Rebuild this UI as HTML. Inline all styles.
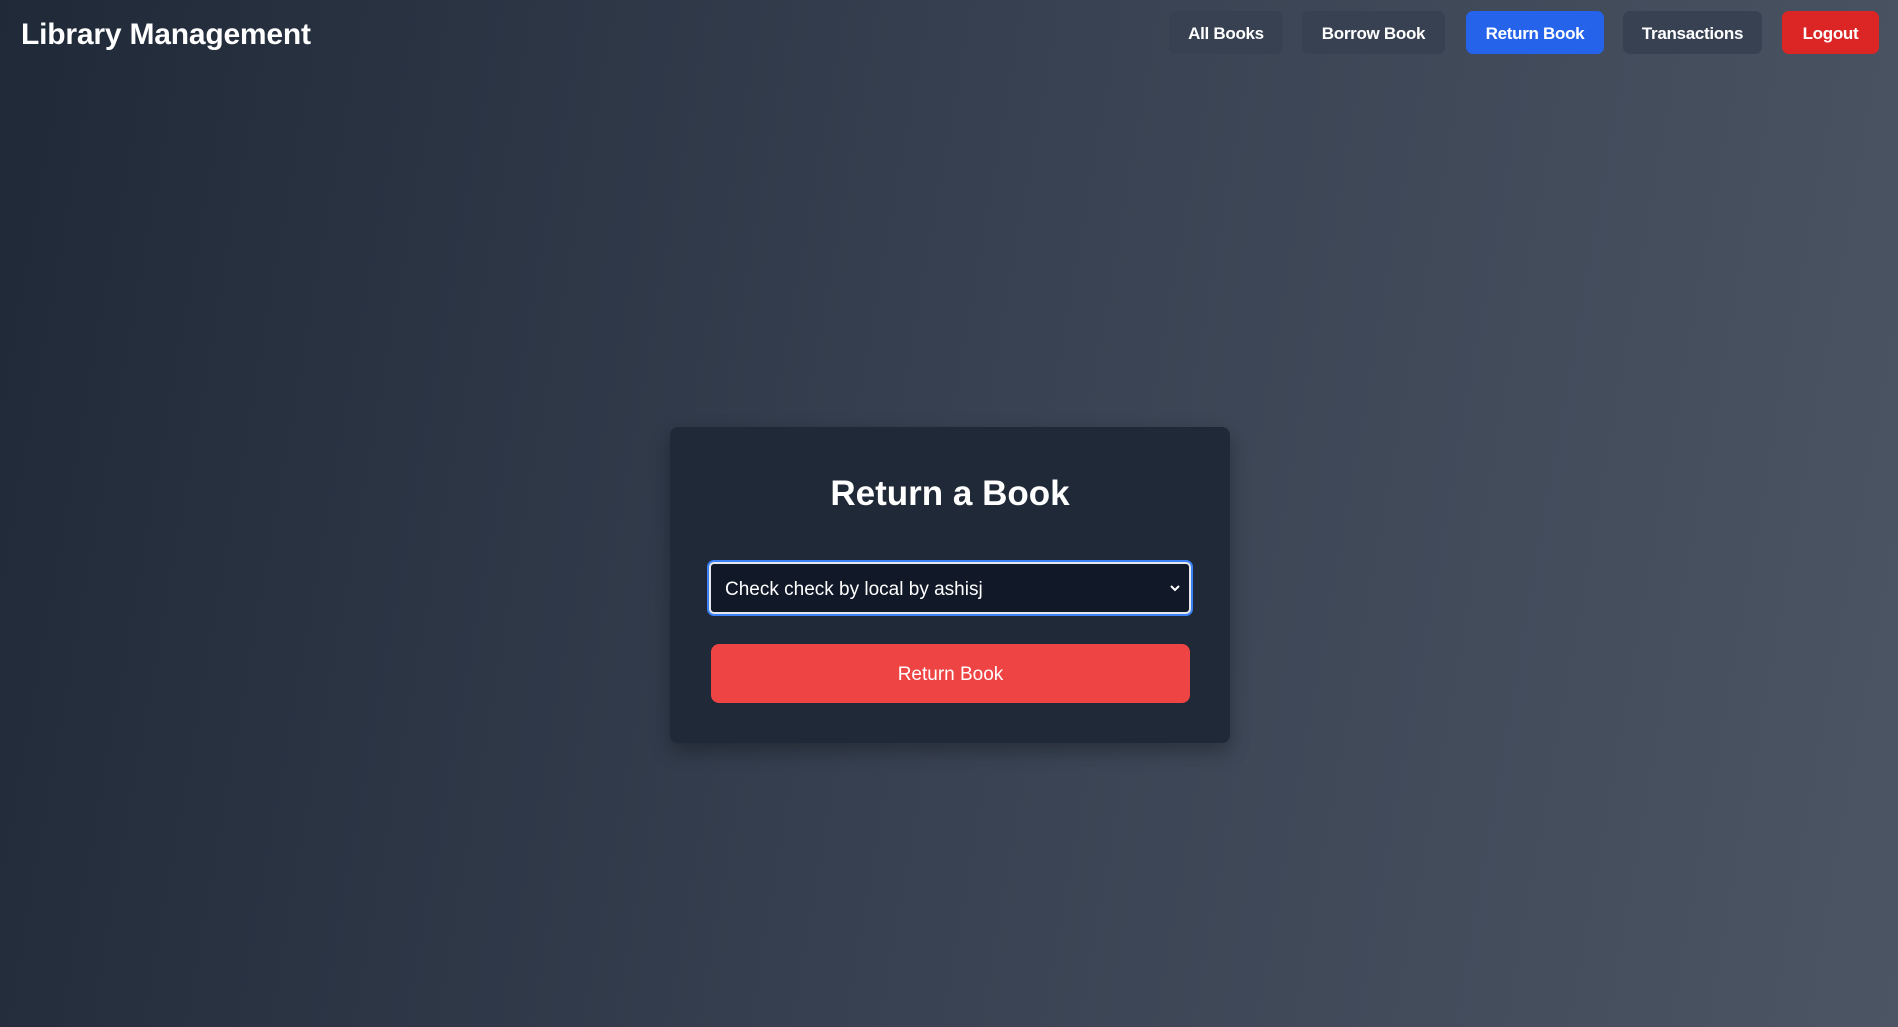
<!DOCTYPE html>
<html><head><meta charset="utf-8"><style>
*{margin:0;padding:0;box-sizing:border-box}
html,body{width:1898px;height:1027px;overflow:hidden}
body{background:linear-gradient(100deg,#1f2937 0%,#374151 50%,#4b5563 100%);font-family:"Liberation Sans",sans-serif;color:#fff;position:relative}
.logo{position:absolute;left:21px;top:18px;font-size:30px;font-weight:700;letter-spacing:-0.2px}
.nav a{position:absolute;top:11px;height:43px;border-radius:7px;background:#374151;color:#fff;font-size:17px;font-weight:700;display:flex;align-items:center;justify-content:center;text-decoration:none;letter-spacing:-0.3px;padding-top:2px}
.card{position:absolute;left:670px;top:427px;width:560px;height:316px;background:#1f2937;border-radius:8px;box-shadow:0 8px 20px rgba(0,0,0,.3)}
.sel{position:absolute;left:709px;top:562px;width:482px;height:52px;background:#111827;border:2px solid #e5e7eb;border-radius:5px;box-shadow:0 0 0 2px #3b82f6;font-size:19px;display:flex;align-items:center;padding-left:14px;padding-top:3px}
.sel svg{position:absolute;right:8px;top:19px}
.btn{position:absolute;left:711px;top:644px;width:479px;height:59px;background:#ef4444;border-radius:8px;font-size:19px;display:flex;align-items:center;justify-content:center;padding-top:3px}
</style></head><body>
<div class="logo">Library Management</div>
<div class="nav">
<a style="left:1169px;width:114px">All Books</a>
<a style="left:1302px;width:143px">Borrow Book</a>
<a style="left:1466px;width:138px;background:#2563eb">Return Book</a>
<a style="left:1623px;width:139px">Transactions</a>
<a style="left:1782px;width:97px;background:#dc2626">Logout</a>
</div>
<div class="card"></div>
<h1 style="position:absolute;left:670px;width:560px;top:474px;text-align:center;font-size:35px;font-weight:700">Return a Book</h1>
<div class="sel">Check check by local by ashisj<svg width="12" height="10" viewBox="0 0 12 10"><path d="M2 3l4 4 4-4" stroke="#fff" stroke-width="2" fill="none"/></svg></div>
<div class="btn">Return Book</div>
</body></html>
